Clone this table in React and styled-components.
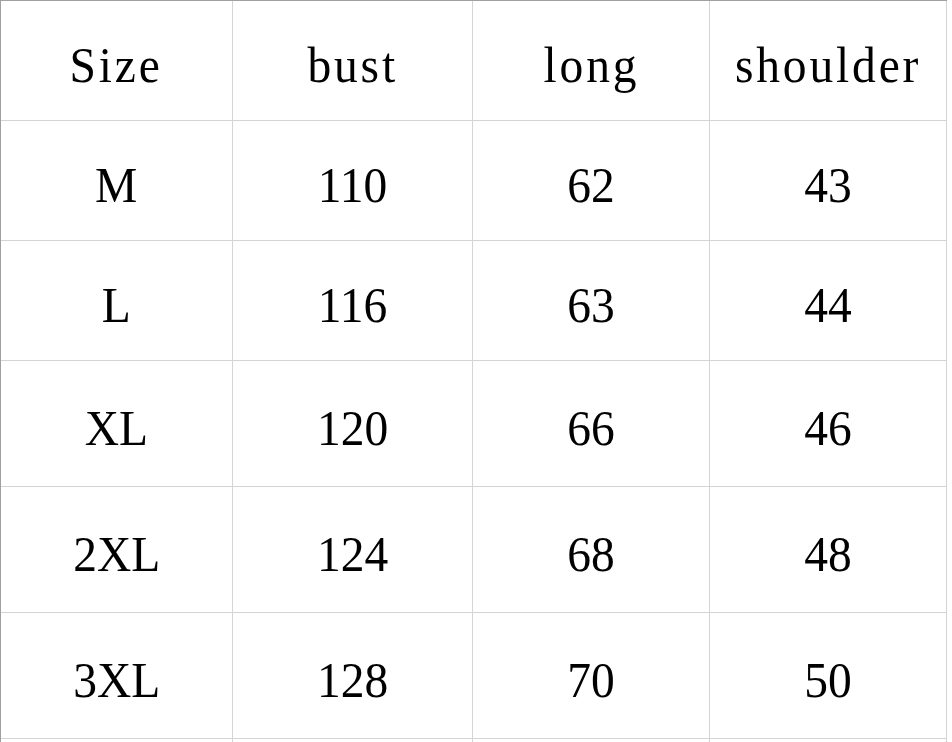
import React from "react";
import styled, { createGlobalStyle } from "styled-components";

const GlobalStyle = createGlobalStyle`
  html, body {
    margin: 0;
    padding: 0;
    background: #ffffff;
    overflow: hidden;
  }
  body {
    font-family: "Liberation Serif", "Times New Roman", serif;
    color: #000;
  }
`;

const Table = styled.div`
  display: grid;
  grid-template-columns: 232px 240px 237px 237px;
  grid-auto-rows: auto;
  width: max-content;
  border-left: 1px solid #a0a0a0;
  border-top: 1px solid #a0a0a0;
  background: #fff;
`;

const Cell = styled.div`
  box-sizing: border-box;
  height: ${(p) => p.$h}px;
  border-right: 1px solid #d4d4d4;
  border-bottom: 1px solid #d4d4d4;
  display: flex;
  align-items: center;
  justify-content: center;
  padding-top: 8px;
  font-size: 50px;
  line-height: 1;
  letter-spacing: ${(p) => (p.$header ? "3px" : "0")};
  white-space: nowrap;
`;

const Label = styled.span`
  display: inline-block;
  transform: scaleX(0.95);
`;

const header = ["Size", "bust", "long", "shoulder"];
const rows = [
  { h: 120, cells: ["M", "110", "62", "43"] },
  { h: 120, cells: ["L", "116", "63", "44"] },
  { h: 126, cells: ["XL", "120", "66", "46"] },
  { h: 126, cells: ["2XL", "124", "68", "48"] },
  { h: 126, cells: ["3XL", "128", "70", "50"] },
  { h: 40, cells: ["", "", "", ""] },
];

export default function App() {
  return (
    <>
      <GlobalStyle />
      <Table>
        {header.map((t) => (
          <Cell key={t} $h={120} $header>
            <Label>{t}</Label>
          </Cell>
        ))}
        {rows.map((r, i) =>
          r.cells.map((t, j) => (
            <Cell key={`${i}-${j}`} $h={r.h}>
              <Label>{t}</Label>
            </Cell>
          ))
        )}
      </Table>
    </>
  );
}
